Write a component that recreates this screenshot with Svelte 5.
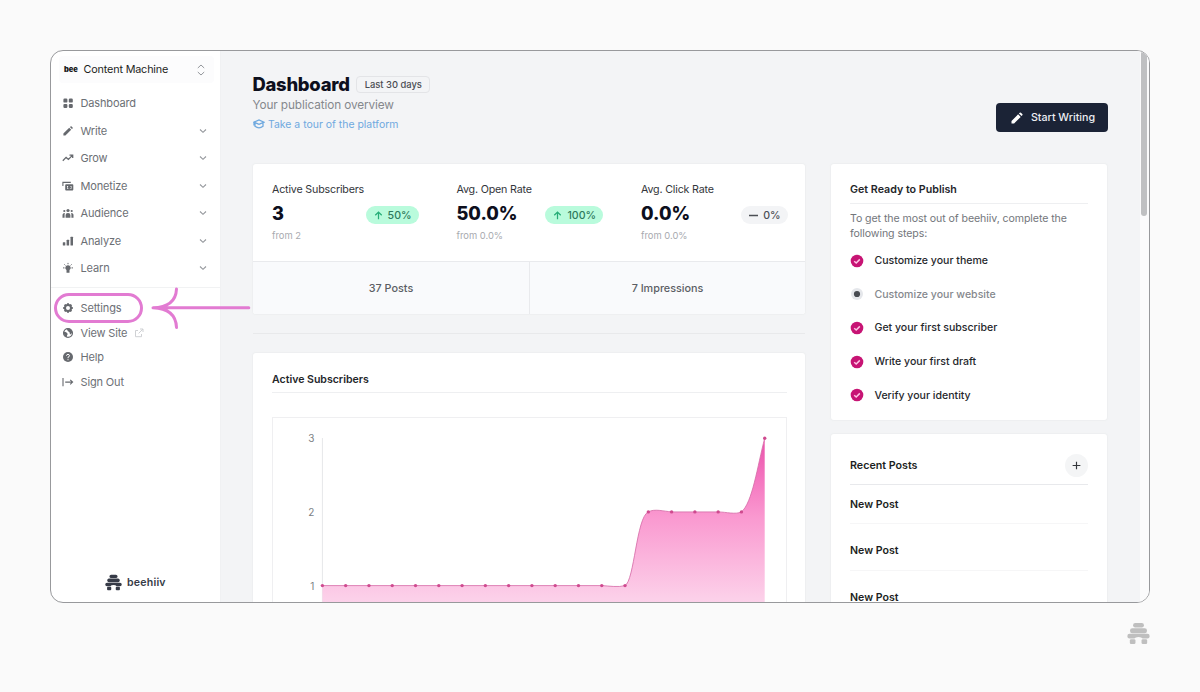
<script>
  const nav = [
    { label: 'Dashboard', icon: 'grid' },
    { label: 'Write', icon: 'pencil', more: true },
    { label: 'Grow', icon: 'trend', more: true },
    { label: 'Monetize', icon: 'money', more: true },
    { label: 'Audience', icon: 'people', more: true },
    { label: 'Analyze', icon: 'bars', more: true },
    { label: 'Learn', icon: 'bulb', more: true },
  ];
  const links = [
    { label: 'Settings', icon: 'gear' },
    { label: 'View Site', icon: 'globe', external: true },
    { label: 'Help', icon: 'help' },
    { label: 'Sign Out', icon: 'exit' },
  ];
  const stats = [
    { label: 'Active Subscribers', value: '3', from: 'from 2', change: '50%', up: true },
    { label: 'Avg. Open Rate', value: '50.0%', from: 'from 0.0%', change: '100%', up: true },
    { label: 'Avg. Click Rate', value: '0.0%', from: 'from 0.0%', change: '0%', up: false },
  ];
  const steps = [
    { label: 'Customize your theme', done: true },
    { label: 'Customize your website', done: false },
    { label: 'Get your first subscriber', done: true },
    { label: 'Write your first draft', done: true },
    { label: 'Verify your identity', done: true },
  ];
  const posts = ['New Post', 'New Post', 'New Post'];
  const series = [1, 1, 1, 1, 1, 1, 1, 1, 1, 1, 1, 1, 1, 1, 2, 2, 2, 2, 2, 3];
  const points = series.map((v, i) => ({ x: 50 + i * 23.28, y: 167.6 - (v - 1) * 73.7 }));
  const line =
    'M50 167.6H329.4C337 168 346 169.5 352.6 167.6C362 163 364 99 375.9 93.9C382 90.5 391 93.2 399.2 93.9H445.8C454 94 463 96.8 469 93.9C480 85 485 48 492.3 20.2';
  const area = line + 'V320H50Z';
</script>

{#snippet hive(cls)}
  <svg class={cls} viewBox="0 0 22 22" fill="currentColor">
    <rect x="5.8" y=".9" width="10.4" height="4.4" rx="2.1" />
    <rect x="2.9" y="5.9" width="16.2" height="4.8" rx="2.2" />
    <path d="M2.6 11.3H19.4A2.2 2.2 0 0 1 19.4 15.9H15Q14 14.3 11 14.3T7 15.9H2.6A2.2 2.2 0 0 1 2.6 11.3Z" />
    <rect x="2.7" y="16.6" width="5.4" height="4.4" rx="1.2" />
    <rect x="13.9" y="16.6" width="5.4" height="4.4" rx="1.2" />
  </svg>
{/snippet}

{#snippet icon(name)}
  <svg class="icon" viewBox="0 0 12 12" fill="currentColor">
    {#if name === 'grid'}
      <rect x="1.4" y="1.6" width="4" height="4" rx="1.2" /><rect x="6.8" y="1.6" width="4" height="4" rx="1.2" />
      <rect x="1.4" y="6.9" width="4" height="4" rx="1.2" /><rect x="6.8" y="6.9" width="4" height="4" rx="1.2" />
    {:else if name === 'pencil'}
      <path d="M1.4 8.6 7.2 2.8 9.2 4.8 3.4 10.6H1.4ZM7.9 2.1 8.6 1.4Q9.1 1 9.6 1.4L10.6 2.4Q11 2.9 10.6 3.4L9.9 4.1Z" />
    {:else if name === 'trend'}
      <path d="M.8 8.7 4.1 5.4 6.4 7.4 10.4 3.4M7.5 3.1H10.7V6.1" fill="none" stroke="currentColor" stroke-width="1.3" />
    {:else if name === 'money'}
      <path d="M.9 6.1V2.4H8.8" fill="none" stroke="currentColor" stroke-width="1.1" />
      <path fill-rule="evenodd" d="M4.1 4.2H10.4Q11.3 4.2 11.3 5.1V9.5Q11.3 10.4 10.4 10.4H4.1Q3.2 10.4 3.2 9.5V5.1Q3.2 4.2 4.1 4.2ZM5 5.9V8.7H9.5V5.9Z" /><circle cx="7.3" cy="7.3" r="1.6" />
    {:else if name === 'people'}
      <circle cx="6" cy="3.5" r="1.6" /><circle cx="2.3" cy="4" r="1.1" /><circle cx="9.7" cy="4" r="1.1" />
      <path d="M3.6 10.8V8Q3.6 5.9 6 5.9T8.4 8V10.8ZM.5 10.8V7.8Q.5 5.8 3 5.9Q2.6 6.6 2.6 7.8V10.8ZM11.5 10.8V7.8Q11.5 5.8 9 5.9Q9.4 6.6 9.4 7.8V10.8Z" />
    {:else if name === 'bars'}
      <rect x=".8" y="7.3" width="2.5" height="3.3" rx=".5" /><rect x="4.6" y="4.8" width="2.5" height="5.8" rx=".5" /><rect x="8.5" y="1.7" width="2.5" height="8.9" rx=".5" />
    {:else if name === 'bulb'}
      <path d="M6 3.3A2.6 2.6 0 0 1 7.5 8.1V10.7H4.5V8.1A2.6 2.6 0 0 1 6 3.3Z" />
      <path d="M6 .9V2.2M1 5.9H2.5M9.5 5.9H11M2.4 2.4 3.4 3.4M9.6 2.4 8.6 3.4" stroke="currentColor" />
    {:else if name === 'gear'}
      <path d="M6 1.2V3M6 9V10.8M1.2 6H3M9 6H10.8M2.6 2.6 3.8 3.8M8.2 8.2 9.4 9.4M9.4 2.6 8.2 3.8M3.8 8.2 2.6 9.4" stroke="currentColor" stroke-width="2" />
      <circle cx="6" cy="6" r="3" fill="none" stroke="currentColor" stroke-width="2" />
    {:else if name === 'globe'}
      <circle cx="6" cy="6" r="4.4" fill="none" stroke="currentColor" stroke-width="1.3" />
      <path d="M1.7 4.4Q3.8 4.6 5.2 6.1Q6.2 7.3 5 8.4L4.9 10.3Q1.5 9 1.7 4.4ZM4.6 1.6Q9.6 1.2 10.3 5.2L8.7 7.4Q7.3 6.6 7.5 5.3Q5.4 4.6 4.6 1.6Z" />
    {:else if name === 'help'}
      <circle cx="6" cy="6" r="5" />
      <path d="M4.5 4.7Q4.6 3.4 6 3.4T7.5 4.7Q7.5 5.7 6 6.2V7.2M6 8.2V9.2" fill="none" stroke="#fff" stroke-width="1" />
    {:else if name === 'exit'}
      <path d="M1 2V10.2M3.2 6.1H10.6M8.2 3.8 10.6 6.1 8.2 8.4" fill="none" stroke="currentColor" stroke-width="1.1" />
    {/if}
  </svg>
{/snippet}

<div class="page">
  <div class="frame">
    <aside>
      <div class="workspace">
        <span class="bee">bee</span>
        <span class="wname">Content Machine</span>
        <svg width="10" height="14" viewBox="0 0 10 14" fill="none" stroke="#94979c" stroke-width="1"><path d="M1.8 5 5 2 8.2 5M1.8 9 5 12 8.2 9" /></svg>
      </div>
      <nav>
        {#each nav as n}
          <div class="item">
            {@render icon(n.icon)}<span>{n.label}</span>
            {#if n.more}<svg class="chev" viewBox="0 0 8 6" fill="none" stroke="#94979c" stroke-width="1.1"><path d="M1 1.5 4 4.3 7 1.5" /></svg>{/if}
          </div>
        {/each}
      </nav>
      <div class="links">
        {#each links as n}
          <div class="item">
            {@render icon(n.icon)}<span>{n.label}</span>
            {#if n.external}<svg class="ext" viewBox="0 0 10 10" fill="none" stroke="#cfd1d4"><path d="M4 2.5H1.5V8.7H7.5V6M6 1H9V4M9 1 4.6 5.4" /></svg>{/if}
          </div>
        {/each}
      </div>
      <div class="brand">{@render hive('hive')}<span>beehiiv</span></div>
    </aside>

    <main>
      <header>
        <div>
          <div class="title"><h1>Dashboard</h1><span class="range">Last 30 days</span></div>
          <p class="sub">Your publication overview</p>
          <a class="tour" href="#tour">
            <svg viewBox="0 0 12 12" fill="none" stroke="currentColor" stroke-width="1.3"><path d="M1 4.2 6 2 11 4.2 6 6.4ZM2 5.2V8.3Q6 11.6 10 8.3V5.2M1 4.5V7.5" /></svg>
            Take a tour of the platform</a>
        </div>
        <button><svg viewBox="0 0 12 12" fill="currentColor"><path d="M.5 11.5V8.9L7.1 2.3 9.7 4.9 3.1 11.5ZM7.9 1.5 8.7.7Q9.3.2 9.9.7L11.3 2.1Q11.8 2.7 11.3 3.3L10.5 4.1Z" /></svg>Start Writing</button>
      </header>

      <div class="columns">
        <div class="left">
          <section class="card overview">
            <div class="stats">
              {#each stats as s}
                <div class="stat">
                  <div class="slabel">{s.label}</div>
                  <div class="row">
                    <strong>{s.value}</strong>
                    <span class="pill" class:up={s.up}>
                      <svg viewBox="0 0 10 10" fill="none" stroke="currentColor" stroke-width="1.4"><path d={s.up ? 'M5 9.3V1.2M1.4 4.8 5 1.2 8.6 4.8' : 'M0 5H10'} /></svg>{s.change}
                    </span>
                  </div>
                  <div class="from">{s.from}</div>
                </div>
              {/each}
            </div>
            <div class="totals"><div>37 Posts</div><div>7 Impressions</div></div>
          </section>
          <hr />
          <section class="card chart">
            <h2>Active Subscribers</h2>
            <div class="plot">
              <svg width="513" height="240" viewBox="0.6 0 513 240">
                <defs>
                  <linearGradient id="pink" gradientUnits="userSpaceOnUse" x1="0" y1="20" x2="0" y2="240">
                    <stop offset="0" stop-color="#e951aa" />
                    <stop offset=".18" stop-color="#f475bf" />
                    <stop offset=".36" stop-color="#fa99d0" />
                    <stop offset=".73" stop-color="#fcd0e9" />
                    <stop offset="1" stop-color="#fee7f4" />
                  </linearGradient>
                </defs>
                <path d="M50 20V240" stroke="#e6e7e9" />
                <path d={area} fill="url(#pink)" />
                <path d={line} fill="none" stroke="#d46aa6" stroke-width=".8" />
                {#each points as p}<circle cx={p.x} cy={p.y} r="1.7" fill="#cf4a8f" />{/each}
                <text x="42" y="24">3</text><text x="42" y="97.5">2</text><text x="42" y="171.5">1</text>
              </svg>
            </div>
          </section>
        </div>

        <div class="right">
          <section class="card ready">
            <h2>Get Ready to Publish</h2>
            <p>To get the most out of beehiiv, complete the following steps:</p>
            {#each steps as s}
              <div class="step" class:todo={!s.done}>
                <svg viewBox="0 0 14 14">
                  {#if s.done}<circle cx="7" cy="7" r="6.3" fill="#c71474" /><path d="M4.2 7.2 6.2 9 9.8 5.4" fill="none" stroke="#ffc4e6" stroke-width="1.5" />
                  {:else}<circle cx="7" cy="7" r="6" fill="#e5e7eb" /><circle cx="7" cy="7" r="3.1" fill="#484b51" />{/if}
                </svg>{s.label}
              </div>
            {/each}
          </section>
          <section class="card recent">
            <div class="rhead"><span>Recent Posts</span><i><svg viewBox="0 0 10 10" stroke="#33363b" stroke-width="1.3"><path d="M5 .7V9.3M.7 5H9.3" /></svg></i></div>
            {#each posts as p}<div class="post">{p}</div>{/each}
          </section>
        </div>
      </div>
    </main>
    <div class="track"><div class="thumb"></div></div>
  </div>

  <svg class="callout" width="200" height="46" viewBox="0 0 200 46" fill="none" stroke="#e27bd2" stroke-width="3" stroke-linecap="round">
    <rect x="3.5" y="8.5" width="86" height="27" rx="13.5" />
    <path d="M101 21.8H196.8M124.5 3C124 15 116 21.3 101 21.8C116 22.3 124 29 124.5 41.5" />
  </svg>
  {@render hive('mark')}
</div>

<style>
  :global(body) { margin: 0; background: #fafafa; overflow: hidden; }
  .page { position: relative; box-sizing: border-box; width: 1200px; height: 692px; padding: 50px; background: #fafafa; overflow: hidden; font-family: Inter, sans-serif; font-size: 10.6px; color: #1c1e22; }
  .frame { box-sizing: border-box; width: 1100px; height: 553px; display: flex; border: 1px solid #98999c; border-radius: 13px; overflow: hidden; background: #fff; }
  h1, h2, p { margin: 0; }

  aside { box-sizing: border-box; width: 170px; flex: none; display: flex; flex-direction: column; padding-top: 5px; border-right: 1px solid #f0f1f3; }
  .workspace { height: 27px; margin: 0 6px 6.3px 8px; padding: 0 8px 0 5px; display: flex; align-items: center; background: #fcfcfd; border-radius: 4px; }
  .bee { width: 19.5px; font-size: 7.5px; font-weight: 900; color: #17181b; letter-spacing: -.1px; }
  .wname { flex: 1; font-size: 10.8px; letter-spacing: -.16px; }
  .item { display: flex; align-items: center; height: 27.5px; padding: 0 12px 0 11px; color: #6c6f75; font-size: 11px; letter-spacing: -.15px; }
  .item span { margin-left: 6.5px; }
  .icon { width: 12px; height: 12px; color: #66696e; }
  .chev { width: 8px; height: 6px; margin-left: auto; margin-right: 1px; }
  .ext { width: 10px; height: 10px; margin-left: 7px; }
  .links { margin-top: 5.7px; padding-top: 7.6px; border-top: 1px solid #f1f2f3; }
  .links .item { height: 24.5px; }
  .brand { margin-top: auto; height: 40px; padding-left: 54px; display: flex; align-items: center; gap: 5px; color: #363b47; font-weight: 600; font-size: 10.6px; letter-spacing: .2px; }

  main { flex: 1; min-width: 0; padding: 0 32px; background: #f3f4f6; overflow: hidden; }
  header { height: 112px; display: flex; justify-content: space-between; }
  .title { display: flex; align-items: center; gap: 6.5px; height: 24px; padding-top: 20.6px; }
  h1 { font-size: 18.4px; line-height: 24px; font-weight: 800; color: #0d0f1d; letter-spacing: -.25px; margin-left: -.5px; }
  .range { box-sizing: border-box; height: 17px; padding: 0 7.5px; border: 1px solid #e3e4e7; border-radius: 4px; font-size: 9.4px; line-height: 15px; font-weight: 500; color: #4a4d53; margin-top: 2px; }
  .sub { margin-top: 1.4px; font-size: 11.8px; line-height: 16px; letter-spacing: -.11px; margin-left: -.5px; color: #85888d; }
  .tour { display: flex; align-items: center; margin-top: 4px; gap: 3px; font-size: 10.45px; line-height: 15px; color: #6fa9df; text-decoration: none; }
  .tour svg { width: 12px; height: 12px; }
  button { display: flex; align-items: center; justify-content: center; gap: 8px; width: 112px; height: 29px; margin-top: 52px; border: 0; border-radius: 4px; background: #1b2336; color: #eceef3; font: 500 10.7px Inter, sans-serif; padding: 0 0 0 2px; }
  button svg { width: 12px; height: 12px; color: #fff; }

  .columns { display: grid; grid-template-columns: 552px 276px; gap: 26px; }
  .card { box-sizing: border-box; background: #fff; border-radius: 3px; box-shadow: 0 0 1px 1px #eeeff1; }
  .overview { height: 150px; margin-top: 1px; overflow: hidden; }
  .stats { height: 97px; display: grid; grid-template-columns: repeat(3, 184.5px); }
  .stat { box-sizing: border-box; padding: 18px 19px 0 19px; }
  .slabel { font-size: 10.7px; line-height: 15px; letter-spacing: -.18px; color: #33363b; white-space: nowrap; }
  .row { display: flex; align-items: center; justify-content: space-between; height: 32px; }
  .row strong { font-size: 18.2px; font-weight: 800; color: #0d0f1d; }
  .pill { display: flex; align-items: center; gap: 5px; height: 18px; padding: 0 7px 0 8px; margin-top: 4px; border-radius: 9px; background: #f3f4f6; font-size: 10.6px; font-weight: 500; color: #4c4f55; }
  .pill.up { background: #b9fbdc; color: #2d7a5d; }
  .pill.up svg { color: #26ad77; }
  .pill svg { width: 9px; height: 9px; }
  .from { font-size: 9.4px; line-height: 13px; color: #a8aaaf; }
  .totals { display: grid; grid-template-columns: 1fr 1fr; height: 53px; border-top: 1px solid #e9eaed; background: #f9fafc; line-height: 53px; text-align: center; font-weight: 500; font-size: 10.8px; color: #5b5e64; }
  .totals div + div { border-left: 1px solid #e9eaed; }
  hr { height: 1px; margin: 19px 0; border: 0; background: #e8e9eb; }
  .chart { height: 300px; padding: 18px 18px 0 19px; }
  h2 { box-sizing: border-box; height: 22px; border-bottom: 1px solid #eeeff1; font-size: 10.55px; line-height: 17px; font-weight: 600; color: #24262a; }
  .plot { margin-top: 24px; border: 1px solid #efeff1; height: 260px; }
  .plot svg { display: block; }
  text { font: 10px Inter, sans-serif; fill: #7c7f84; text-anchor: end; }

  .ready { height: 256px; margin-top: 1px; padding: 18px 19px 0; }
  .ready h2 { font-size: 10.7px; line-height: 16px; }
  .ready p { padding-top: 7px; font-size: 10.6px; letter-spacing: -.08px; line-height: 15px; color: #73767b; margin-bottom: 3px; margin-right: -6px; }
  .step { display: flex; align-items: center; height: 33.6px; gap: 10.5px; font-weight: 500; font-size: 10.55px; color: #26282c; }
  .step svg { width: 14px; height: 14px; }
  .todo { color: #85888d; }
  .recent { height: 220px; margin-top: 14px; padding: 14px 19px 0; }
  .rhead { box-sizing: border-box; height: 37px; display: flex; align-items: center; justify-content: space-between; border-bottom: 1px solid #e8e9ec; padding-bottom: 2px; font-weight: 600; font-size: 10.7px; }
  .rhead i { display: flex; align-items: center; justify-content: center; width: 23px; height: 23px; border-radius: 50%; background: #f4f5f6; }
  .rhead svg { width: 9px; height: 9px; }
  .post { box-sizing: border-box; height: 46.6px; line-height: 53px; border-bottom: 1px solid #f6f6f7; font-weight: 600; }
  .rhead + .post { height: 39.4px; line-height: 39px; }

  .track { width: 9px; flex: none; background: #fbfbfc; }
  .thumb { width: 6px; height: 165px; margin-left: 1px; border-radius: 3px; background: #bfc0c2; }

  .callout { position: absolute; left: 52px; top: 286px; }
  .mark { position: absolute; left: 1127px; top: 622px; width: 23px; height: 23px; color: #bfbfbf; }
  .hive { width: 17px; height: 17px; }
</style>
